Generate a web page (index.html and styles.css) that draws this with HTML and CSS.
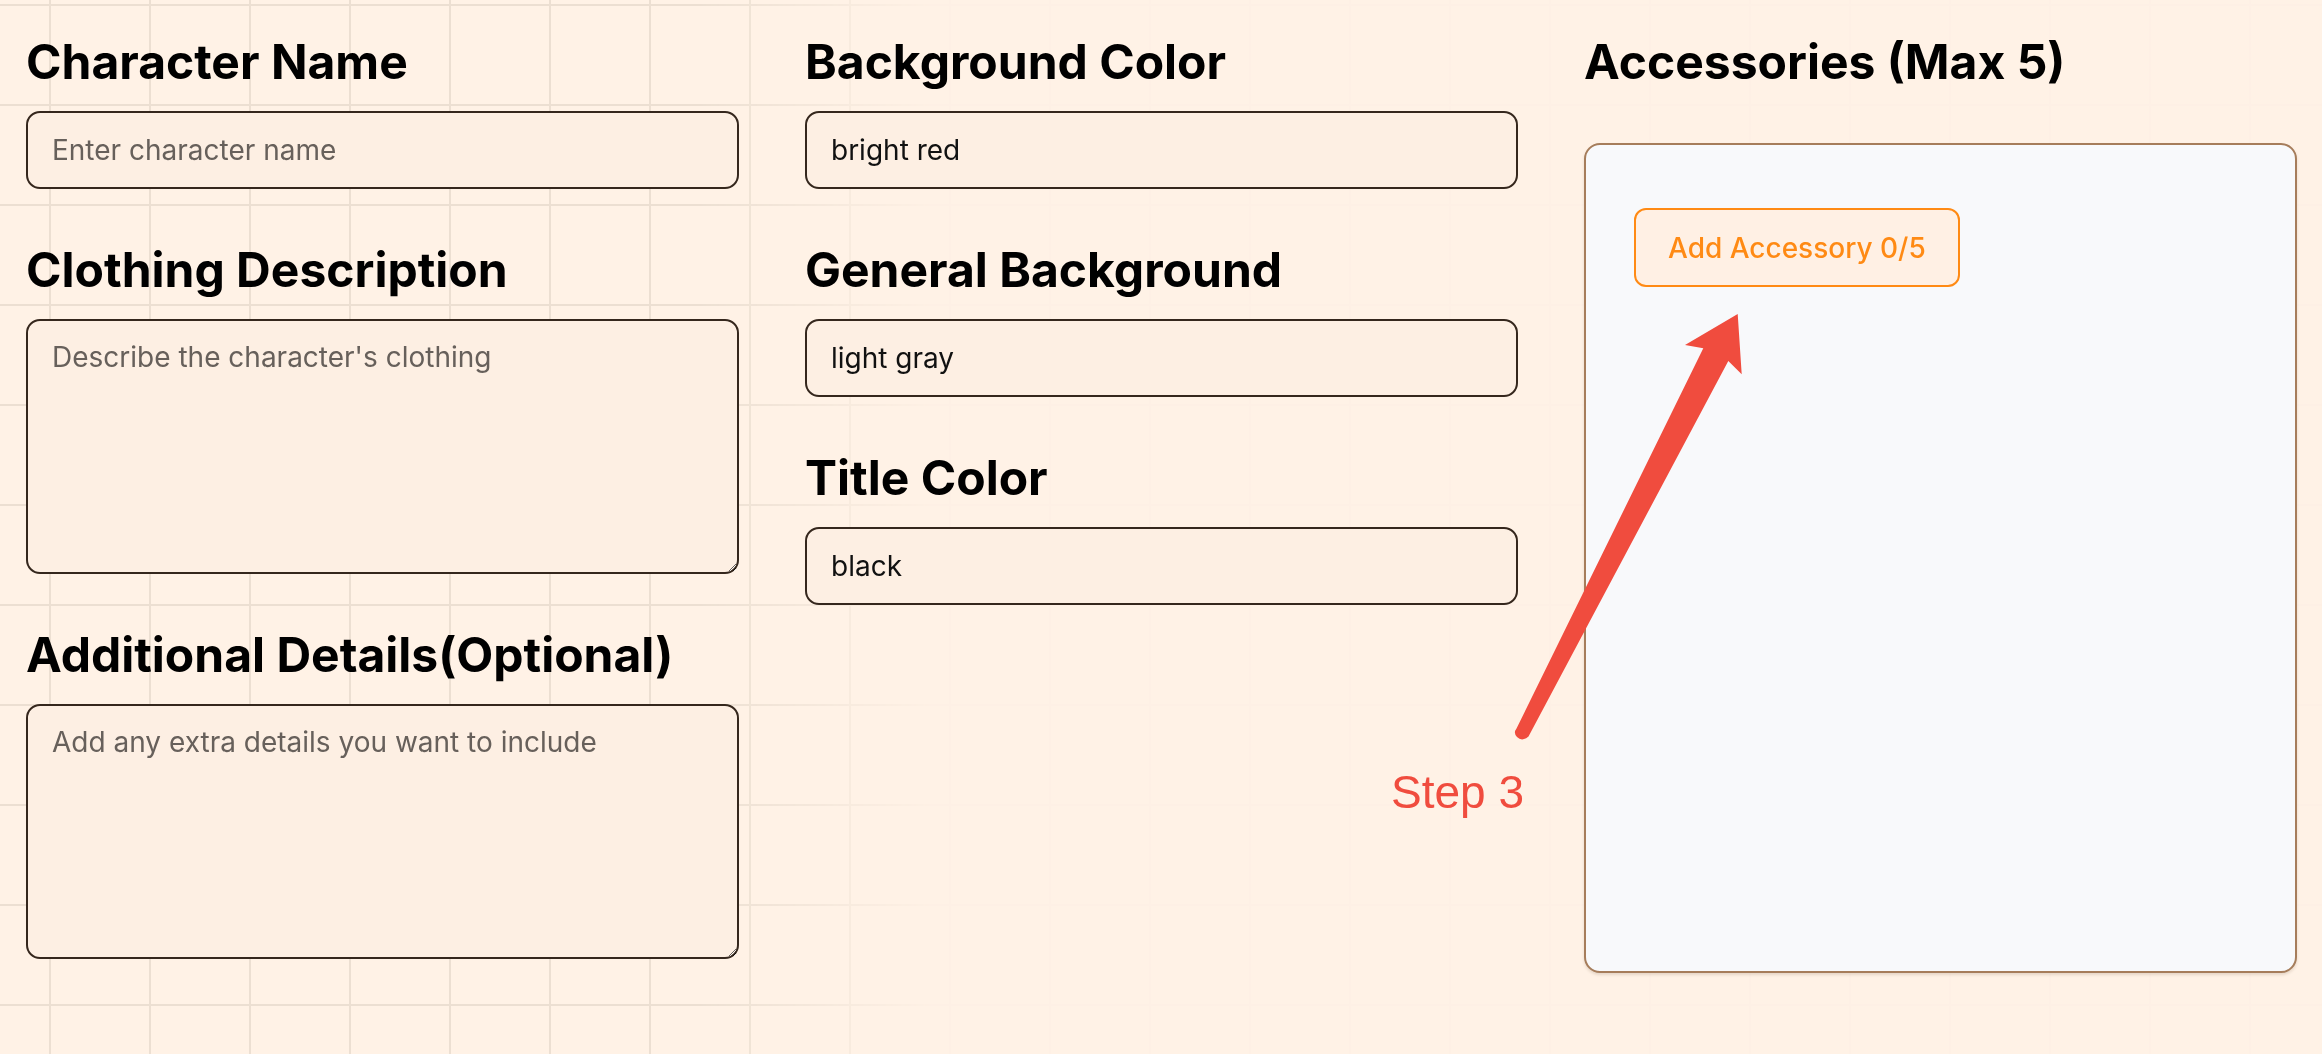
FILE: index.html
```html
<!DOCTYPE html>
<html lang="en">
<head>
<meta charset="utf-8">
<title>Character Form</title>
<link rel="stylesheet" href="styles.css">
</head>
<body>
<div class="grid-bg"></div>
<main class="form">
  <section class="col">
    <div class="field">
      <h2 class="label">Character Name</h2>
      <input class="text-input" type="text" placeholder="Enter character name">
    </div>
    <div class="field">
      <h2 class="label">Clothing Description</h2>
      <textarea class="text-area" placeholder="Describe the character's clothing"></textarea>
    </div>
    <div class="field">
      <h2 class="label">Additional Details(Optional)</h2>
      <textarea class="text-area" placeholder="Add any extra details you want to include"></textarea>
    </div>
  </section>
  <section class="col">
    <div class="field">
      <h2 class="label">Background Color</h2>
      <input class="text-input" type="text" value="bright red">
    </div>
    <div class="field">
      <h2 class="label">General Background</h2>
      <input class="text-input" type="text" value="light gray">
    </div>
    <div class="field">
      <h2 class="label">Title Color</h2>
      <input class="text-input" type="text" value="black">
    </div>
  </section>
  <section class="col">
    <h2 class="label">Accessories (Max 5)</h2>
    <div class="acc-box">
      <button class="acc-btn" type="button">Add Accessory 0/5</button>
    </div>
  </section>
</main>
<div class="annotation">
  <svg class="arrow" width="2322" height="1054" viewBox="0 0 2322 1054" xmlns="http://www.w3.org/2000/svg">
    <path d="M1516.5 728.5 L1703.3 348.3 L1685 345 L1737.7 314 L1741.7 374.3 L1728.3 361 L1528.5 736.5 Q1522 742 1517 737 Q1513 733 1516.5 728.5 Z" fill="#f04c3e"/>
  </svg>
  <span class="step">Step 3</span>
</div>
</body>
</html>
```

FILE: styles.css
```css
* { box-sizing: border-box; }

html, body {
  margin: 0;
  padding: 0;
}

body {
  background: #fff2e6;
  font-family: "Inter", "Noto Sans", sans-serif;
  color: #000;
  min-height: 1054px;
  position: relative;
  overflow: hidden;
}

.grid-bg {
  position: fixed;
  inset: 0;
  z-index: 0;
  pointer-events: none;
  background-image:
    linear-gradient(to right, #ecdfd2 0, #ecdfd2 2px, transparent 2px),
    linear-gradient(to bottom, #ecdfd2 0, #ecdfd2 2px, transparent 2px);
  background-size: 100px 100px;
  background-position: 49px 4px;
  -webkit-mask-image: linear-gradient(to right, #000 0, #000 700px, rgba(0,0,0,0.05) 930px, rgba(0,0,0,0.05) 100%);
  mask-image: linear-gradient(to right, #000 0, #000 700px, rgba(0,0,0,0.05) 930px, rgba(0,0,0,0.05) 100%);
}

.form {
  position: relative;
  z-index: 1;
  display: grid;
  grid-template-columns: repeat(3, 1fr);
  column-gap: 66px;
  padding: 33px 25px 0 26px;
  align-items: start;
}

.col {
  display: flex;
  flex-direction: column;
  gap: 52px;
}

.field {
  display: flex;
  flex-direction: column;
  gap: 20px;
}

.label {
  margin: 0;
  font-size: 48px;
  line-height: 1.21;
  font-weight: 700;
  color: #000;
}

.text-input,
.text-area {
  display: block;
  width: 100%;
  font-family: "Inter", "Noto Sans", sans-serif;
  font-size: 28px;
  color: #111;
  background: #fdefe3;
  border: 2px solid #35271d;
  border-radius: 14px;
  outline: none;
  margin: 0;
}

.text-input {
  height: 78px;
  padding: 0 24px;
}

.text-area {
  height: 255px;
  padding: 15px 24px;
  line-height: 1.5;
}

.text-input::placeholder,
.text-area::placeholder {
  color: #67605b;
  opacity: 1;
}

.acc-box {
  height: 830px;
  background: #f8f9fb;
  border: 2px solid #a67d5b;
  border-radius: 16px;
  box-shadow: 0 2px 3px rgba(90, 60, 30, 0.15);
  padding: 63px 48px;
  display: flex;
  align-items: flex-start;
}

.acc-btn {
  font-family: "Inter", "Noto Sans", sans-serif;
  font-size: 28px;
  font-weight: 500;
  color: #ff8a14;
  background: #fff0e4;
  border: 2px solid #ff8a14;
  border-radius: 12px;
  height: 79px;
  padding: 0 32px;
  cursor: pointer;
}

.annotation {
  position: absolute;
  inset: 0;
  z-index: 2;
  pointer-events: none;
}

.arrow {
  position: absolute;
  left: 0;
  top: 0;
}

.step {
  position: absolute;
  left: 1391px;
  top: 769px;
  font-family: "Liberation Sans", Arial, sans-serif;
  font-size: 46px;
  line-height: 1;
  color: #f04c3e;
}
```
